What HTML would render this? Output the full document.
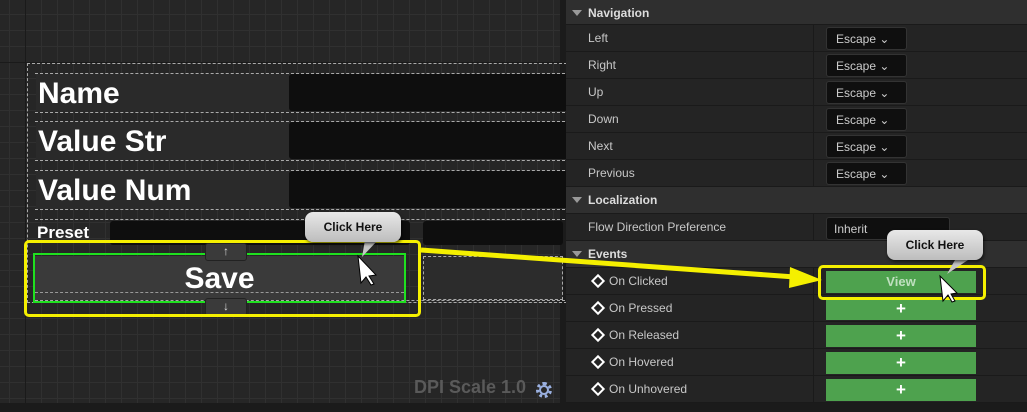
<!DOCTYPE html><html><head><style>
*{margin:0;padding:0;box-sizing:border-box}
body{width:1027px;height:412px;overflow:hidden;background:#1b1b1b;font-family:"Liberation Sans",sans-serif;position:relative}
.vp{position:absolute;left:0;top:0;width:560px;height:403px;background-color:#262626;
background-image:linear-gradient(#1a1a1a,#1a1a1a),linear-gradient(90deg,#1a1a1a,#1a1a1a),linear-gradient(#303030 1px,transparent 1px),linear-gradient(90deg,#303030 1px,transparent 1px);
background-size:560px 1px,1px 403px,16px 16px,16px 16px;background-position:0 62px,25px 0,0 14px,9px 0;background-repeat:no-repeat,no-repeat,repeat,repeat}
.a{position:absolute}
.d{border:1px dashed #aaa}
.lbl{position:absolute;color:#fff;font-weight:bold;font-size:30px;left:38px}
.fld{position:absolute;background:#0e0e0e;border-radius:3px}
.rp{position:absolute;left:566px;top:0;width:461px;height:403px;background:#242424}
.row{position:absolute;left:566px;width:461px;height:27px;border-bottom:1px solid #1a1a1a;color:#c8c8c8;font-size:12px}
.row span{position:absolute;left:22px;top:6px}
.hd{background:#2f2f2f;font-weight:bold;color:#ddd}
.hd span{left:22px}
.hd:before{content:"";position:absolute;left:6px;top:10px;border:5px solid transparent;border-top:6px solid #999;border-bottom:0}
.vdiv{position:absolute;left:813px;width:1px;background:#1a1a1a}
.esc{position:absolute;left:826px;width:81px;height:23px;background:#0f0f0f;border:1px solid #333;border-radius:3px;color:#ccc;font-size:12px;padding:4px 0 0 9px}
.gb{position:absolute;left:826px;width:150px;height:22px;background:#4ea24e;color:#fff;font-weight:bold;font-size:17px;text-align:center;line-height:22px}
.ev span{left:43px}
.dia{position:absolute;left:27px;top:8px;width:10px;height:10px;border:2px solid #fff;transform:rotate(45deg)}
.call{position:absolute;width:96px;height:30px;background:linear-gradient(#e8e8e8,#bdbdbd);border-radius:8px;font-weight:bold;font-size:12px;color:#111;text-align:center;line-height:30px;box-shadow:1px 2px 3px rgba(0,0,0,.6)}
</style></head><body>
<div class="vp"></div>
<div class="a d" style="left:27px;top:63px;width:540px;height:240px"></div>
<div class="a" style="left:36px;top:74px;width:530px;height:38px;background:#2a2a2a"></div>
<div class="fld" style="left:289px;top:74px;width:280px;height:37px"></div>
<div class="a d" style="left:35px;top:73px;width:530px;height:40px;border-left:none;border-right:none"></div>
<div class="lbl" style="top:77px">Name</div>
<div class="a" style="left:36px;top:122px;width:530px;height:38px;background:#2a2a2a"></div>
<div class="fld" style="left:289px;top:122px;width:280px;height:37px"></div>
<div class="a d" style="left:35px;top:121px;width:530px;height:40px;border-left:none;border-right:none"></div>
<div class="lbl" style="top:125px">Value Str</div>
<div class="a" style="left:36px;top:171px;width:530px;height:38px;background:#2a2a2a"></div>
<div class="fld" style="left:289px;top:171px;width:280px;height:37px"></div>
<div class="a d" style="left:35px;top:170px;width:530px;height:40px;border-left:none;border-right:none"></div>
<div class="lbl" style="top:174px">Value Num</div>
<div class="a d" style="left:35px;top:219px;width:530px;height:82px;border-left:none;border-right:none"></div>
<div class="fld" style="left:110px;top:221px;width:300px;height:24px"></div>
<div class="fld" style="left:423px;top:221px;width:140px;height:24px"></div>
<div class="a d" style="left:423px;top:256px;width:140px;height:44px;background:#2c2c2c"></div>
<div class="a" style="left:37px;top:223px;color:#fff;font-weight:bold;font-size:17px">Preset</div>
<div class="a" style="left:33px;top:253px;width:373px;height:50px;border:2px solid #1fe01f"></div>
<div class="a" style="left:35px;top:256px;width:369px;height:44px;background:#3a3a3a"></div>
<div class="a" style="left:35px;top:292px;width:369px;height:1px;border-top:1px dashed #999"></div>
<div class="a" style="left:35px;top:262px;width:369px;text-align:center;color:#fff;font-weight:bold;font-size:30px">Save</div>
<div class="a" style="left:205px;top:243px;width:42px;height:18px;background:#3a3a3a;border:1px solid #222;border-radius:3px;color:#ddd;font-size:12px;text-align:center">↑</div>
<div class="a" style="left:205px;top:298px;width:42px;height:18px;background:#3a3a3a;border:1px solid #222;border-radius:3px;color:#ddd;font-size:12px;text-align:center">↓</div>
<div class="a" style="left:24px;top:240px;width:397px;height:77px;border:3px solid #f5f000;border-radius:5px"></div>
<div class="a" style="left:414px;top:377px;color:#5a5a5a;font-weight:bold;font-size:18px">DPI Scale 1.0</div>
<div class="a" style="left:536px;top:382px;width:16px;height:16px;border:3px dotted #9ab0e0;border-radius:50%"></div>
<div class="a" style="left:539px;top:385px;width:10px;height:10px;border:2px solid #9ab0e0;border-radius:50%"></div>

<div class="rp"></div>
<div class="vdiv" style="top:25px;height:162px"></div>
<div class="vdiv" style="top:214px;height:27px"></div>
<div class="vdiv" style="top:268px;height:135px"></div>
<div class="row hd" style="top:0;height:25px"><span>Navigation</span></div>
<div class="row" style="top:25px"><span>Left</span></div>
<div class="row" style="top:52px"><span>Right</span></div>
<div class="row" style="top:79px"><span>Up</span></div>
<div class="row" style="top:106px"><span>Down</span></div>
<div class="row" style="top:133px"><span>Next</span></div>
<div class="row" style="top:160px"><span>Previous</span></div>
<div class="row hd" style="top:187px"><span>Localization</span></div>
<div class="row" style="top:214px"><span>Flow Direction Preference</span></div>
<div class="row hd" style="top:241px"><span>Events</span></div>
<div class="row ev" style="top:268px"><i class="dia"></i><span>On Clicked</span></div>
<div class="row ev" style="top:295px"><i class="dia"></i><span>On Pressed</span></div>
<div class="row ev" style="top:322px"><i class="dia"></i><span>On Released</span></div>
<div class="row ev" style="top:349px"><i class="dia"></i><span>On Hovered</span></div>
<div class="row ev" style="top:376px"><i class="dia"></i><span>On Unhovered</span></div>
<div class="esc" style="top:27px">Escape ⌄</div>
<div class="esc" style="top:54px">Escape ⌄</div>
<div class="esc" style="top:81px">Escape ⌄</div>
<div class="esc" style="top:108px">Escape ⌄</div>
<div class="esc" style="top:135px">Escape ⌄</div>
<div class="esc" style="top:162px">Escape ⌄</div>
<div class="esc" style="top:217px;width:124px;font-size:12px;padding-left:7px">Inherit</div>
<div class="gb" style="top:271px;font-size:13px;color:#bfe0bf">View</div>
<div class="gb" style="top:298px">+</div>
<div class="gb" style="top:325px">+</div>
<div class="gb" style="top:352px">+</div>
<div class="gb" style="top:379px">+</div>
<div class="a" style="left:818px;top:265px;width:168px;height:35px;border:3px solid #f5f000;border-radius:5px"></div>

<svg class="a" style="left:0;top:0" width="1027" height="412">
<line x1="421" y1="250" x2="795" y2="277" stroke="#f5f000" stroke-width="5"/>
<polygon points="790,267 822,280 789,288" fill="#f5f000"/>
<polygon points="358,256 361,283 366,277 371,285 374,284 369,276 376,275" fill="#fff" stroke="#000" stroke-width="1"/>
<polygon points="940,276 943,301 948,295 952,302 955,301 951,294 957,293" fill="#fff" stroke="#000" stroke-width="1"/>
<polygon points="365,240 378,240 362,257" fill="#c6c6c6"/>
<polygon points="955,260 968,260 947,274" fill="#c6c6c6"/>
</svg>
<div class="call" style="left:305px;top:212px">Click Here</div>
<div class="call" style="left:887px;top:230px">Click Here</div>
</body></html>
